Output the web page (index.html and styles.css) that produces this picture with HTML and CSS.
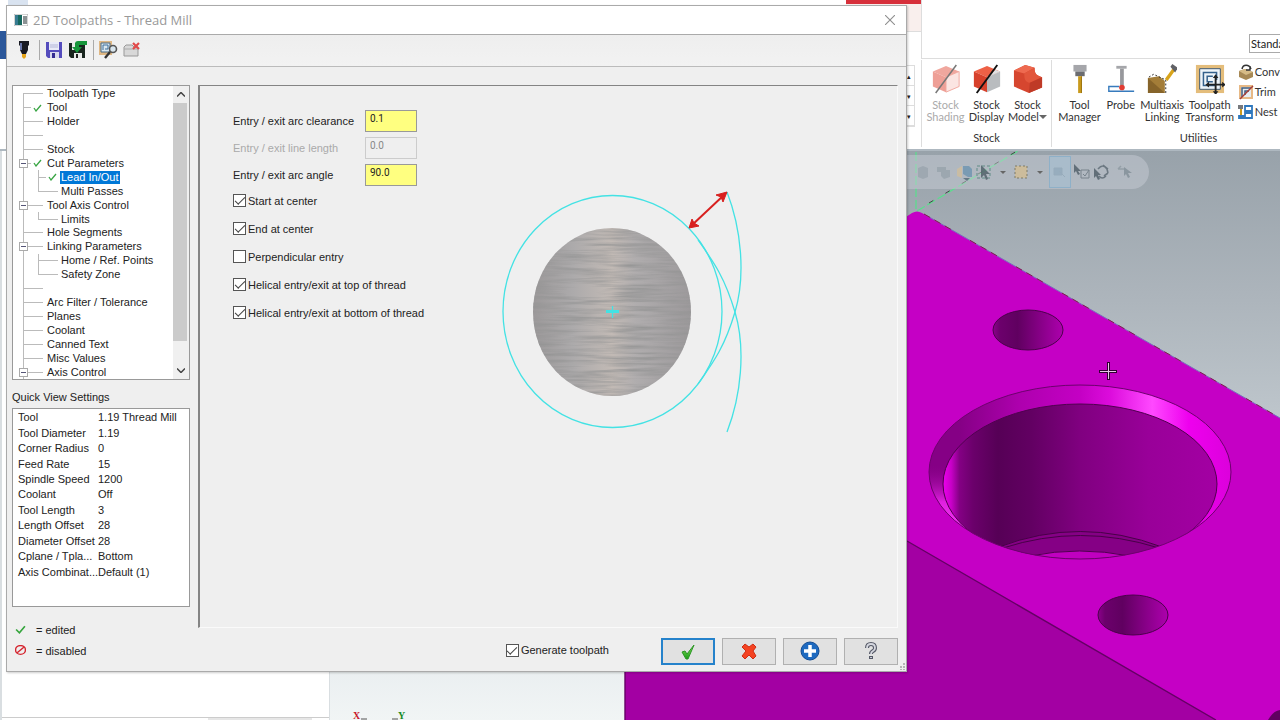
FILE: index.html
```html
<!DOCTYPE html>
<html lang="en">
<head>
<meta charset="utf-8">
<title>2D Toolpaths - Thread Mill</title>
<link rel="stylesheet" href="styles.css">
</head>
<body>
<div class="app">
  <header class="app-head">
    <div class="caption">
      <div class="caption-left"><span class="quick-tab"></span><span class="file-tab"></span></div>
      <div class="context-tab"></div>
      <div class="caption-right"><input class="view-style" type="text" value="Standard" aria-label="View style"></div>
    </div>
    <div class="ribbon">
      <div class="gallery-end">
        <div class="spin"><button aria-label="Previous">▴</button><button aria-label="Next">▾</button><button aria-label="More">▾</button></div>
      </div>
      <section class="group stock">
        <div class="tools">
          <button class="tool faded" disabled>
            <svg viewBox="0 0 32 32"><path d="M2 8 16 2l14 6-14 6z" fill="#f0a79e"/><path d="M2 8l14 6v16L2 24z" fill="#ee9f96"/><path d="M16 14l14-6v16l-14 6z" fill="#fbe5e2" stroke="#f0a79e"/><path d="M5 31 27 1" stroke="#777" stroke-width="1.6"/></svg>
            <span>Stock<br>Shading</span></button>
          <button class="tool">
            <svg viewBox="0 0 32 32"><path d="M2 8 16 2l14 6-14 6z" fill="#ee6046"/><path d="M2 8l14 6v16L2 24z" fill="#d7412b"/><path d="M16 14l14-6v16l-14 6z" fill="#b9bcbf"/><path d="M16 14l14-6-5-2z" fill="#dfe1e3"/><path d="M5 31 27 1" stroke="#111" stroke-width="2"/></svg>
            <span>Stock<br>Display</span></button>
          <button class="tool">
            <svg viewBox="0 0 32 32"><path d="M1 7 13 1l10 3c0 7 2 8 8 10v11l-14 6-16-7z" fill="#d6462f"/><path d="M1 7 13 1l10 3-11 6z" fill="#ee6a50"/><path d="M12 10 23 4c0 7 2 8 8 10l-13 6c-5-1-6-4-6-10z" fill="#e2563c"/><path d="M18 20l13-6v11l-14 6z" fill="#bf3a27"/></svg>
            <span>Stock<br>Model<i class="caret"></i></span></button>
        </div>
        <h2>Stock</h2>
      </section>
      <section class="group utilities">
        <div class="tools">
          <button class="tool wide">
            <svg viewBox="0 0 32 32"><path d="M9 1h14v7H9z" fill="#a5a6aa"/><path d="M11 8h10v5H11z" fill="#6b6c70"/><path d="M14 13h4v18h-4z" fill="#c99a1c"/><path d="M17 13h1v18h-1z" fill="#98700c"/></svg>
            <span>Tool<br>Manager</span></button>
          <button class="tool slim">
            <svg viewBox="0 0 32 32"><path d="M11 2h11v3H11z" fill="#a5a6aa"/><path d="M15 5h4v18h-4z" fill="#97989c"/><path d="M30 29H3v-5h11" fill="none" stroke="#377bbd" stroke-width="1.5"/><circle cx="17" cy="25" r="3" fill="#e13c32"/></svg>
            <span>Probe</span></button>
          <button class="tool wide">
            <svg viewBox="0 0 32 32"><path d="M1 15l12-2 6 5v13H1z" fill="#a37d38"/><path d="M1 15l18 16H1z" fill="#86642a"/><path d="M2 14 7 11l13 6v14" fill="none" stroke="#222" stroke-dasharray="2 2"/><path d="M19 16 27 5l3 2-8 11z" fill="#d8a41c"/><path d="M25 3l2-3 6 4-3 5z" fill="#606166"/></svg>
            <span>Multiaxis<br>Linking</span></button>
          <button class="tool widest">
            <svg viewBox="0 0 32 32"><path d="M1 1h30v30H1z" fill="#e4bd7b"/><path d="M5 5h22v22H5z" fill="#eef4f9" stroke="#36536e"/><path d="M22 23H9V9h14v8M19 19h-6v-6h6" fill="none" stroke="#35618c" stroke-width="1.6"/><path d="M22 14v17M14 22h17" stroke="#222" stroke-width="2"/><path d="M22 11l-3 4h6zM22 33l-3-4h6zM11 22l4-3v6zM33 22l-4-3v6z" fill="#222"/></svg>
            <span>Toolpath<br>Transform</span></button>
          <div class="minis">
            <button><svg viewBox="0 0 16 16"><path d="M1 7l6-2 8 3v5l-7 3-7-3z" fill="#a78955"/><path d="M1 7l6-2 8 3-7 3z" fill="#d6bb86"/><path d="M4 5c1-5 7-5 9 0M12 2v4H8" fill="none" stroke="#333" stroke-width="1.5"/></svg>Conv</button>
            <button><svg viewBox="0 0 16 16"><path d="M1 1h14v14H1z" fill="#e7b986"/><path d="M3 3h10v10H3z" fill="#e6edf3"/><path d="M4 13V4h9M7 11V7h4" fill="none" stroke="#415e7d" stroke-width="1.5"/><path d="M2 15 15 2" stroke="#a73e36" stroke-width="1.5"/></svg>Trim</button>
            <button><svg viewBox="0 0 16 16"><path d="M0 1h5v4H0z" fill="#77797d"/><path d="M2 5h2v6H2z" fill="#c99a1c"/><path d="M7 2h7v5H7zM7 9h7v5H1v-2h6zM7 2v12" fill="none" stroke="#2f78bd" stroke-width="1.8"/></svg>Nest</button>
          </div>
        </div>
        <h2>Utilities</h2>
      </section>
    </div>
  </header>

  <div class="workspace">
    <aside class="manager"><div class="hscroll"><span></span></div></aside>
    <main class="viewport">
      <svg class="scene" viewBox="330 151 950 569" preserveAspectRatio="xMaxYMin slice" aria-label="Part model">
        <defs>
          <linearGradient id="sky" x1="0" y1="0" x2="0" y2="1"><stop offset="0" stop-color="#98a2aa"/><stop offset=".25" stop-color="#acb4bb"/><stop offset=".45" stop-color="#bcc4ca"/><stop offset=".9" stop-color="#e9eef0"/><stop offset="1" stop-color="#f1f5f5"/></linearGradient>
          <linearGradient id="chamfer"><stop offset="0" stop-color="#850085"/><stop offset=".1" stop-color="#850085"/><stop offset=".3" stop-color="#ae00ae"/><stop offset=".5" stop-color="#c400c4"/><stop offset=".6" stop-color="#dc0cdc"/><stop offset=".74" stop-color="#ff49ff"/><stop offset=".86" stop-color="#ee00ee"/><stop offset="1" stop-color="#dc00dc"/></linearGradient>
          <linearGradient id="bore"><stop offset="0" stop-color="#ee00ee"/><stop offset=".03" stop-color="#c800c8"/><stop offset=".06" stop-color="#840084"/><stop offset=".11" stop-color="#6b006b"/><stop offset=".2" stop-color="#560056"/><stop offset=".32" stop-color="#620062"/><stop offset=".5" stop-color="#800080"/><stop offset=".75" stop-color="#990099"/><stop offset="1" stop-color="#a300a3"/></linearGradient>
          <linearGradient id="drill"><stop offset="0" stop-color="#8c008c"/><stop offset=".1" stop-color="#6c006c"/><stop offset=".35" stop-color="#600060"/><stop offset="1" stop-color="#ad00ad"/></linearGradient>
          <linearGradient id="lip" x1="0" y1="0" x2="0" y2="1"><stop offset="0" stop-color="#850085" stop-opacity="0"/><stop offset=".5" stop-color="#e020e0"/><stop offset="1" stop-color="#ff3cff"/></linearGradient>
          <clipPath id="mouth"><ellipse cx="1080" cy="472" rx="151" ry="87"/></clipPath>
        </defs>
        <path d="M330 151h950v569H330z" fill="url(#sky)"/>
        <path d="M916 152v60M917 211l101-60" stroke="#58e08c" stroke-width="1.200" stroke-dasharray="9 3" fill="none"/>
        <path d="M929 203l88-52" stroke="#444" stroke-dasharray="5 14" fill="none"/>
        <path d="M625 400 912 213q5-3 10 0l358 205v302H625z" fill="#c500c5"/>
        <path d="M625 380 907 541l309 179H625z" fill="#a300a3"/>
        <path d="M625 380v340M907 541l309 179" stroke="#650065" stroke-width="1.4" fill="none"/>
        <path d="M924 214l356 204" stroke="#7a6cc0" fill="none"/>
        <path d="M924 214l356 204" stroke="#8b154b" stroke-dasharray="7 5 7 5 7 22" fill="none"/>
        <path d="M1268 720q5-9 12-10v10z" fill="#600060"/>
        <ellipse cx="1080" cy="472" rx="151" ry="87" fill="url(#chamfer)"/>
        <g clip-path="url(#mouth)">
          <path d="M925 464h35l30 76h-65z" fill="url(#lip)"/>
          <ellipse cx="1080" cy="484" rx="137" ry="80" fill="url(#bore)" stroke="#500050"/>
          <path d="M999 547q81-31 163 0v20H999z" fill="#850085" stroke="#480048"/>
          <path d="M1003 548q77-25 156 0" fill="none" stroke="#480048"/>
          <path d="M1030 556q49-10 100 0v10h-100z" fill="#c000c0" stroke="#500050"/>
        </g>
        <ellipse cx="1080" cy="472" rx="151" ry="87" fill="none" stroke="#6e006e"/>
        <g fill="url(#drill)" stroke="#4c004c"><ellipse cx="1028" cy="330" rx="35" ry="20"/><ellipse cx="1133" cy="615" rx="35" ry="20"/></g>
        <path d="M1108.500 362v18M1099 371.500h18" stroke="#300030" stroke-width="3"/><path d="M1108.500 363v16M1100 371.500h16" stroke="#e9c4e9"/>
        <path d="M361 719h6M398 719h-6" stroke="#555"/>
        <text class="axis-x" x="353" y="719">X</text><text class="axis-y" x="398" y="719">Y</text>
      </svg>
      <div class="selection-bar">
        <button aria-label="Solid"><svg viewBox="0 0 18 18"><path d="M3 5l5-2 5 2v9l-5 2-5-2z" fill="#9aa5ae"/></svg></button>
        <button aria-label="Face"><svg viewBox="0 0 18 18"><path d="M2 4h9v3h4v7l-6 2-3-3V9H2z" fill="#98a3ac"/></svg></button>
        <button aria-label="Body"><svg viewBox="0 0 18 18"><path d="M2 6l5-3v12l-5-2z" fill="#cfbd9d"/><path d="M8 3h6l3 3v8h-4l-5-3z" fill="#6d95b0"/><path d="M8 15h7l-3 3z" fill="#536a78"/></svg></button>
        <button aria-label="Select"><svg viewBox="0 0 18 18"><path d="M2 3h13v12H2z" fill="none" stroke="#4d8278" stroke-dasharray="3 2"/><path d="M6 2v13l3-3 2 5 2-1-2-5h4z" fill="#4c5d65"/></svg></button>
        <i class="caret"></i>
        <button aria-label="Window"><svg viewBox="0 0 18 18"><path d="M3 3h12v12H3z" fill="#d3bd93" stroke="#716c52" stroke-dasharray="2 2"/></svg></button>
        <i class="caret"></i>
        <button class="on" aria-label="Verify"><svg viewBox="0 0 18 18"><path d="M3 5h8v7H3zM8 8l6 6" fill="#93aabc" stroke="#93a8b8"/></svg></button>
        <button aria-label="Validate"><svg viewBox="0 0 18 18"><path d="M1 1v9l2-2 2 4 2-1-2-3h3z" fill="#4f5e68"/><path d="M8 7h8v8H8zM10 11l2 2 4-6" fill="none" stroke="#68757e"/></svg></button>
        <button aria-label="Invert"><svg viewBox="0 0 18 18"><path d="M5 6q5-6 9 0l1 4M13 13q-4 4-7 0M10 2l5 4M15 10l-4 3" fill="none" stroke="#5c6973" stroke-width="1.600"/><path d="M1 5v10l2-2 2 4 2-1-2-4h3z" fill="#4f5e68"/></svg></button>
        <button class="end" aria-label="Select last"><svg viewBox="0 0 18 18"><path d="M2 6h7M2 6l3-3" fill="none" stroke="#8d99a1" stroke-width="1.500"/><path d="M8 4v9l2-2 2 4 2-1-2-4h4z" fill="#818e97"/></svg></button>
      </div>
    </main>
  </div>
</div>

<div class="dialog" role="dialog" aria-labelledby="dialog-title">
  <div class="title-bar">
    <svg class="app-icon" viewBox="0 0 14 12"><path d="M0 0h14v12H0z" fill="#fff" stroke="#aaa"/><path d="M1 1h7v10H1z" fill="#16685f"/><path d="M9 2h4v8H9z" fill="#8b9294"/><path d="M1 1h3v10H1z" fill="#387c91"/></svg>
    <h1 id="dialog-title">2D Toolpaths - Thread Mill</h1>
    <button class="close" aria-label="Close"><svg viewBox="0 0 10 10"><path d="M0 0l10 10M10 0 0 10" stroke="#8f8f8f" stroke-width="1.1"/></svg></button>
  </div>
  <div class="toolbar">
    <button aria-label="Tool"><svg viewBox="0 0 20 20"><path d="M5 1h10v4l-1 1v4l-2 4H8L6 10V6L5 5z" fill="#171922"/><path d="M7 3v7" stroke="#6674a8" stroke-width="2"/><path d="M8 14h4v3l-2 2-2-2z" fill="#e6a51c"/></svg></button>
    <span class="rule"></span>
    <button aria-label="Save"><svg viewBox="0 0 20 20"><path d="M2 2h16v16H4l-2-2z" fill="#554dbd"/><path d="M5 2h10v8H5z" fill="#e8eaf8"/><path d="M6 5h8M6 7h8" stroke="#b4b7d8"/><path d="M6 12h9v6H6z" fill="#d9d9ee"/><path d="M8 13h3v5H8z" fill="#332b91"/></svg></button>
    <button aria-label="Load defaults"><svg viewBox="0 0 20 20"><path d="M1 3h16v15H3l-2-2z" fill="#18241d"/><path d="M4 3h3v7H4zM6 13h8v5H6z" fill="#e8eae8"/><path d="M8 14h2v4H8z" fill="#222"/><path d="M19 1h-9q-3 0-3 3v3H4l5 6 5-6h-3V5h8z" fill="#17963b"/></svg></button>
    <span class="rule"></span>
    <button aria-label="Preview"><svg viewBox="0 0 20 20"><path d="M1 1h13v14H1z" fill="#dfb783"/><path d="M3 3h9v9H3z" fill="#d9e7f0" stroke="#496b86"/><path d="M5 10V5h5v4H7" fill="none" stroke="#3c6f9b"/><circle cx="15" cy="9" r="3.5" fill="#d8e5ed" stroke="#555" stroke-width="1.6"/><path d="M12 12l-5 6" stroke="#333" stroke-width="2.4"/></svg></button>
    <button aria-label="Close panel"><svg viewBox="0 0 20 20"><path d="M2 7l2-2h6l2 2h4v9H2z" fill="#d8d8d8" stroke="#999"/><path d="M2 9h14" stroke="#aaa"/><path d="M11 3l6 6M17 3l-6 6" stroke="#e14949" stroke-width="2.2"/></svg></button>
  </div>

  <div class="dialog-body">
    <div class="side">
      <div class="tree-box">
        <ul class="tree" role="tree">
          <li class="first"><b></b><b></b><span>Toolpath Type</span></li>
          <li class="marked"><b></b><svg class="tick"><use href="#tick"/></svg><span>Tool</span></li>
          <li><b></b><b></b><span>Holder</span></li>
          <li></li>
          <li><b></b><b></b><span>Stock</span></li>
          <li class="marked"><button class="toggle" aria-label="Collapse Cut Parameters"></button><svg class="tick"><use href="#tick"/></svg><span>Cut Parameters</span></li>
          <li class="sub marked"><b></b><svg class="tick"><use href="#tick"/></svg><span class="selected">Lead In/Out</span></li>
          <li class="sub last"><b></b><b></b><span>Multi Passes</span></li>
          <li><button class="toggle" aria-label="Collapse Tool Axis Control"></button><b></b><span>Tool Axis Control</span></li>
          <li class="sub last"><b></b><b></b><span>Limits</span></li>
          <li><b></b><b></b><span>Hole Segments</span></li>
          <li><button class="toggle" aria-label="Collapse Linking Parameters"></button><b></b><span>Linking Parameters</span></li>
          <li class="sub"><b></b><b></b><span>Home / Ref. Points</span></li>
          <li class="sub last"><b></b><b></b><span>Safety Zone</span></li>
          <li></li>
          <li><b></b><b></b><span>Arc Filter / Tolerance</span></li>
          <li><b></b><b></b><span>Planes</span></li>
          <li><b></b><b></b><span>Coolant</span></li>
          <li><b></b><b></b><span>Canned Text</span></li>
          <li><b></b><b></b><span>Misc Values</span></li>
          <li><button class="toggle" aria-label="Collapse Axis Control"></button><b></b><span>Axis Control</span></li>
        </ul>
        <div class="scrollbar">
          <button aria-label="Scroll up"><svg viewBox="0 0 8 5"><path d="M0 4.500l4-4 4 4" fill="none" stroke="#444" stroke-width="1.500"/></svg></button>
          <span class="thumb"></span>
          <button aria-label="Scroll down"><svg viewBox="0 0 8 5"><path d="M0 .5l4 4 4-4" fill="none" stroke="#444" stroke-width="1.500"/></svg></button>
        </div>
      </div>
      <h2>Quick View Settings</h2>
      <div class="quick-box">
        <table>
          <tr><th>Tool</th><td>1.19 Thread Mill</td></tr>
          <tr><th>Tool Diameter</th><td>1.19</td></tr>
          <tr><th>Corner Radius</th><td>0</td></tr>
          <tr><th>Feed Rate</th><td>15</td></tr>
          <tr><th>Spindle Speed</th><td>1200</td></tr>
          <tr><th>Coolant</th><td>Off</td></tr>
          <tr><th>Tool Length</th><td>3</td></tr>
          <tr><th>Length Offset</th><td>28</td></tr>
          <tr><th>Diameter Offset</th><td>28</td></tr>
          <tr><th>Cplane / Tpla...</th><td>Bottom</td></tr>
          <tr><th>Axis Combinat...</th><td>Default (1)</td></tr>
        </table>
      </div>
      <p class="legend"><svg viewBox="0 0 10 10"><path d="M1 5l3 3 5-6" fill="none" stroke="#35a53c" stroke-width="1.500"/></svg>= edited</p>
      <p class="legend"><svg viewBox="0 0 10 10"><ellipse cx="5" cy="4.500" rx="4.500" ry="4" fill="none" stroke="#d5242e" stroke-width="1.300"/><path d="M2 7l6-5" stroke="#d5242e" stroke-width="1.300"/></svg>= disabled</p>
    </div>

    <div class="content">
      <div class="pane">
        <form class="settings">
          <div class="field"><label for="clearance">Entry / exit arc clearance</label><input id="clearance" type="text" value="0.1"></div>
          <div class="field off"><label for="line">Entry / exit line length</label><input id="line" type="text" value="0.0" disabled></div>
          <div class="field"><label for="angle">Entry / exit arc angle</label><input id="angle" type="text" value="90.0"></div>
          <label class="check"><input type="checkbox" checked>Start at center</label>
          <label class="check"><input type="checkbox" checked>End at center</label>
          <label class="check"><input type="checkbox">Perpendicular entry</label>
          <label class="check"><input type="checkbox" checked>Helical entry/exit at top of thread</label>
          <label class="check"><input type="checkbox" checked>Helical entry/exit at bottom of thread</label>
        </form>
        <svg class="diagram" viewBox="500 188 246 248" aria-label="Lead in and lead out diagram">
          <defs>
            <linearGradient id="metal"><stop offset="0" stop-color="#9c999a"/><stop offset=".25" stop-color="#acaaab"/><stop offset=".5" stop-color="#c2bab5"/><stop offset=".65" stop-color="#b0adae"/><stop offset="1" stop-color="#9c999b"/></linearGradient>
            <filter id="brushed" x="0" y="0" width="1" height="1"><feTurbulence type="fractalNoise" baseFrequency=".018 .3" numOctaves="3" seed="4"/><feColorMatrix values="0 0 0 0 .3  0 0 0 0 .3  0 0 0 0 .3  2 0 0 0 -.75"/><feComposite in2="SourceGraphic" operator="in"/></filter>
          </defs>
          <ellipse cx="612" cy="312" rx="79" ry="84" fill="url(#metal)"/>
          <ellipse cx="612" cy="312" rx="79" ry="84" filter="url(#brushed)"/>
          <g fill="none" stroke="#43e2e4" stroke-width="1.300">
            <ellipse cx="612.500" cy="311.500" rx="109.500" ry="116"/>
            <path d="M727 192C741 228 746 275 735 312S712 364 698 384"/>
            <path d="M727 432C741 396 746 349 735 312S712 260 698 240"/>
            <path d="M606 311.500h13" stroke-width="3"/><path d="M612.500 306v12"/>
          </g>
          <path d="M691 226l33-31" stroke="#d8201f" stroke-width="2"/>
          <path d="M689 228l3-9 2 4 5 3zM727 192l-4 10-2-5-5-2z" fill="#d8201f" stroke="#d8201f"/>
        </svg>
      </div>
      <div class="actions">
        <label class="check"><input type="checkbox" checked>Generate toolpath</label>
        <button class="primary" aria-label="OK"><svg viewBox="0 0 20 20"><defs><linearGradient id="green" x1="0" y1="0" x2="0" y2="1"><stop offset="0" stop-color="#8ae45e"/><stop offset="1" stop-color="#199b17"/></linearGradient></defs><path d="M4 11l3-1 2 3 7-9-6 14H8z" fill="url(#green)" stroke="#2d9626"/></svg></button>
        <button aria-label="Cancel"><svg viewBox="0 0 20 20"><path d="M3 6l3-3 4 3 4-3 3 3-3 4 3 5-3 3-4-4-4 4-3-3 4-5z" fill="#f44322" stroke="#cf2e14"/></svg></button>
        <button aria-label="Apply"><svg viewBox="0 0 20 20"><circle cx="10" cy="10" r="9" fill="#1e6ac0" stroke="#124c94"/><path d="M10 4v12M4 10h12" stroke="#fff" stroke-width="3.500"/></svg></button>
        <button aria-label="Help"><svg viewBox="0 0 20 20"><path d="M6 7q0-4 4-4t4 4q0 2-2 3t-2 3M10 15v3" fill="none" stroke="#555967" stroke-width="4"/><path d="M6 7q0-4 4-4t4 4q0 2-2 3t-2 3M10 16v1" fill="none" stroke="#d5d7df" stroke-width="1.800"/></svg></button>
      </div>
    </div>
  </div>
  <svg class="grip" viewBox="0 0 7 7"><path d="M5 0h2v2H5zM2 3h2v2H2zM5 3h2v2H5zM2 6h2v1H2zM5 6h2v1H5z" fill="#b5b5b5"/></svg>
</div>
<svg class="symbols"><symbol id="tick" viewBox="0 0 9 8"><path d="M1 4l2 3 5-6" fill="none" stroke="#39a544" stroke-width="1.300"/></symbol></svg>
</body>
</html>
```
FILE: styles.css
```css
* { box-sizing: border-box; }
body { margin: 0; font: 11px/14px "Liberation Sans", Arial, sans-serif; color: #222; overflow: hidden; }
button { font: inherit; color: inherit; border: 0; padding: 0; background: none; }
h1, h2, p, ul { margin: 0; padding: 0; font-size: inherit; font-weight: normal; }
svg { display: block; }
.symbols { display: none; }

/* Application window */
.app { min-height: 100vh; display: grid; grid-template-rows: auto 1fr; background: #fff; }
.app-head { font-family: Lato, "Open Sans", sans-serif; border-bottom: 2px solid #aeb8c0; }
.caption { height: 59px; display: grid; grid-template-columns: 1fr 75px 359px; }
.caption-left { display: flex; flex-direction: column; justify-content: space-between; }
.quick-tab { width: 20px; height: 5px; margin-left: 8px; background: #d9e3f0; }
.file-tab { width: 12px; height: 28px; background: #2b579a; }
.context-tab { height: 32px; background: #f9efed; border-top: 4px solid #d7303b; border-bottom: 1px solid #ddd; }
.caption-right { border-left: 1px solid #ddd; border-bottom: 1px solid #ddd; display: flex; justify-content: flex-end; align-items: flex-start; padding-top: 34px; }
.view-style { width: 31px; height: 19px; border: 1px solid #aaa; border-right: 0; padding: 0 0 0 1px; font: 11px Lato, "Open Sans", sans-serif; color: #222; }
.ribbon { height: 90px; display: grid; grid-template-columns: 1fr 130px 229px; padding: 1px 0 2px; }
.gallery-end { display: flex; justify-content: flex-end; padding: 5px 6px 20px; }
.spin { display: grid; width: 12px; border: 1px solid #ddd; }
.spin button { font-size: 7px; line-height: 12px; border-bottom: 1px solid #ddd; }
.group { border-left: 1px solid #ddd; overflow: hidden; display: flex; flex-direction: column; justify-content: space-between; text-align: center; line-height: 12px; color: #333; }
.group h2 { font-size: 11px; padding-bottom: 3px; line-height: 12px; }
.utilities h2 { padding-left: 65px; }
.tools { display: flex; padding: 4px 0 0 5px; }
.stock .tools { padding-left: 3px; }
.tool { width: 41px; display: flex; flex-direction: column; align-items: center; gap: 5px; white-space: nowrap; }
.tool svg { width: 30px; height: 30px; flex: none; }
.wide { width: 46px; }
.widest { width: 51px; }
.slim { width: 38px; }
.faded { color: #aaa; }
.caret { display: inline-block; border: 4px solid transparent; border-top-color: #666; border-bottom: 0; vertical-align: 2px; }
.minis { display: grid; grid-auto-rows: 20px; align-self: start; margin-top: -2px; padding-left: 3px; }
.minis button { display: flex; align-items: center; gap: 1px; white-space: nowrap; }
.minis svg { width: 16px; height: 16px; flex: none; }
.workspace { display: grid; grid-template-columns: 330px 1fr; min-height: 0; }
.manager { border: 1px solid #d9dee1; border-width: 0 1px 0 2px; display: flex; flex-direction: column; justify-content: flex-end; }
.hscroll { height: 3px; border-top: 1px solid #ccc; background: #fff; padding-left: 206px; }
.hscroll span { display: block; width: 104px; height: 2px; background: #e6e6e6; }
.viewport { position: relative; overflow: hidden; padding-top: 4px; }
.scene { position: absolute; inset: 0; width: 100%; height: 100%; }
.axis-x, .axis-y { font: bold 10px "Liberation Serif", serif; fill: #c8152a; }
.axis-y { fill: #168a24; }
.selection-bar { position: relative; width: 300px; height: 34px; margin: 0 131px 0 auto; padding-right: 15px; display: flex; align-items: center; justify-content: flex-end; gap: 2px; background: rgba(205, 208, 217, .45); border-radius: 0 17px 17px 0; }
.selection-bar svg { width: 18px; height: 18px; opacity: .8; }
.selection-bar .caret { border-width: 3px; border-bottom: 0; margin: 0 4px 0 5px; }
.selection-bar .on { height: 32px; padding: 0 1px; border: 1px solid #8eb0c8; background: #a9bccb; }
.selection-bar .end { margin-left: 3px; }

/* Dialog window */
.dialog { position: absolute; left: 6px; right: 373px; top: 5px; min-height: calc(100vh - 53px); display: flex; flex-direction: column; background: #efefef; border: 1px solid #aaa; box-shadow: 1px 1px 2px rgba(0, 0, 0, .2); }
.title-bar { height: 29px; display: flex; align-items: center; gap: 5px; padding: 0 11px 0 7px; background: #fff; border-bottom: 1px solid #aaa; }
.app-icon { width: 14px; height: 12px; }
.title-bar h1 { flex: 1; font: 13px/16px "Open Sans", "Noto Sans", sans-serif; color: #999; }
.close svg { width: 10px; height: 10px; }
.toolbar { height: 32px; display: flex; align-items: center; gap: 4px; padding: 0 7px 2px; border-bottom: 1px solid #bbb; background: linear-gradient(#eee, #f2f2f2); }
.toolbar svg { width: 20px; height: 20px; }
.rule { width: 1px; height: 20px; margin-left: 1px; background: #aaa; }
.dialog-body { flex: 1; display: grid; grid-template-columns: 178px 1fr; gap: 8px; padding: 18px 8px 0 5px; }
.tree-box { height: 295px; border: 1px solid #999; background: #fff; display: grid; grid-template-columns: 1fr 16px; }
.tree { list-style: none; display: grid; grid-template-rows: repeat(21, 1fr); height: 293px; padding-top: 1px; --dot: linear-gradient(#bbb, #bbb); }
.tree li { display: grid; grid-template-columns: 19px 14px auto; align-items: center; justify-content: start; white-space: nowrap; line-height: 13px; min-height: 0; background: var(--dot) 10px 0 / 1px 100% no-repeat, var(--dot) 10px 50% / 20px 1px no-repeat; }
.tree .first { background-position: 10px 7px, 10px 50%; }
.tree .marked { background-size: 1px 100%, 8px 1px; }
.tree .sub { grid-template-columns: 34px 13px auto; background: var(--dot) 10px 0 / 1px 100% no-repeat, var(--dot) 25px 0 / 1px 100% no-repeat, var(--dot) 25px 50% / 20px 1px no-repeat; }
.tree .sub.last { background-size: 1px 100%, 1px 50%, 20px 1px; }
.tree .sub.marked { background-size: 1px 100%, 1px 100%, 8px 1px; }
.tree span { padding: 0 1px; }
.tree .selected { background: #0078d7; color: #fff; }
.toggle { width: 9px; height: 9px; margin-left: 6px; border: 1px solid #aaa; background: linear-gradient(#557, #557) center / 5px 1px no-repeat #fff; }
.tick { width: 9px; height: 8px; margin-left: 1px; }
.scrollbar { display: flex; flex-direction: column; background: #f0f0f0; }
.scrollbar button { height: 17px; display: grid; place-items: center; }
.scrollbar svg { width: 8px; height: 5px; }
.thumb { height: 238px; margin-bottom: auto; background: #cbcbcb; margin-right: 2px; }
.side h2 { margin: 10px 0 4px; }
.quick-box { height: 199px; border: 1px solid #999; background: #fff; padding: 1px 5px; }
.quick-box table { height: 170px; border-collapse: collapse; white-space: nowrap; }
.quick-box th { width: 80px; min-width: 80px; max-width: 80px; text-align: left; font-weight: normal; padding: 0; line-height: 13px; }
.quick-box td { padding: 0; line-height: 13px; }
.legend { display: flex; align-items: center; gap: 10px; height: 21px; padding-left: 3px; }
.legend svg { width: 11px; height: 11px; }
.quick-box + .legend { margin-top: 12px; }
.content { display: flex; flex-direction: column; }
.pane { height: 543px; border: 1px solid #fafafa; border-top-color: #848484; border-left: 2px solid #848484; display: grid; grid-template-columns: 267px 246px; align-items: start; padding: 22px 0 0 33px; }
.field { display: flex; align-items: center; justify-content: space-between; width: 184px; height: 27px; padding-bottom: 2px; }
.off label { color: #aaa; }
.field input { width: 52px; height: 22px; border: 1px solid #999; background: #ffff80; padding: 0 4px 4px; font: 10px Roboto, sans-serif; color: #222; }
.field input:disabled { background: #efefef; border-color: #ccc; color: #888; }
.check { display: flex; align-items: center; gap: 2px; height: 28px; white-space: nowrap; }
.settings .check { padding-bottom: 5px; }
.check input { appearance: none; width: 13px; height: 13px; margin: 0; border: 1px solid #555; background: #fff; display: grid; place-items: center; }
.check input:checked::before { content: ""; width: 9px; height: 4px; margin-top: -2px; border: solid #444; border-width: 0 0 1px 1px; rotate: -45deg; }
.diagram { width: 246px; height: 248px; margin-top: 80px; }
.actions { display: flex; align-items: center; justify-content: flex-end; gap: 7px; height: 43px; padding-top: 3px; }
.actions .check { margin-right: 45px; padding-bottom: 2px; }
.actions button { width: 54px; height: 27px; border: 1px solid #b0b0b0; background: #e1e1e1; display: grid; place-items: center; }
.actions .primary { border: 2px solid #2582cb; }
.actions svg { width: 20px; height: 20px; }
.grip { position: absolute; right: 1px; bottom: 1px; width: 7px; height: 7px; }
```
